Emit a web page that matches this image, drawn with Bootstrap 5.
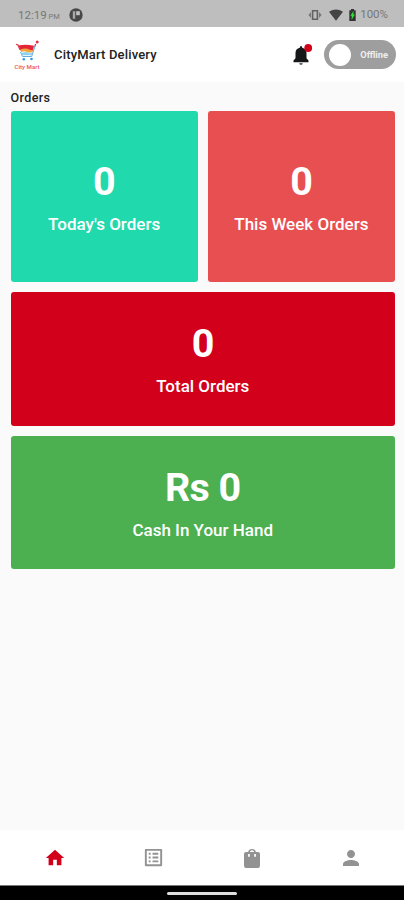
<!DOCTYPE html>
<html lang="en">
<head>
<meta charset="utf-8">
<meta name="viewport" content="width=device-width, initial-scale=1">
<title>CityMart Delivery</title>
<link href="https://cdn.jsdelivr.net/npm/bootstrap@5.3.0/dist/css/bootstrap.min.css" rel="stylesheet">
<style>
body{font-family:Roboto,"Liberation Sans",sans-serif;background:#fafafa;color:#222;height:900px;overflow:hidden}
svg{display:block;flex:none}
.status-bar{height:27px;background:#bebebe;color:#777;font-size:11.5px;padding:2px 16px 0 18px;line-height:25px}
.status-bar .pm{font-size:7.5px}
.time{padding-top:2px}
.app-bar{height:55px;background:#fff;padding:0 8px 0 12px}
.app-title{font-size:13px;font-weight:500;letter-spacing:.17px;margin-left:12px}
.toggle{width:72px;height:29px;background:#9e9e9e;padding:0 8px 0 5px;margin-left:11px;color:#eee;font-size:9.3px;font-weight:700}
.knob{width:22px;height:22px}
.board{padding:7px 9px 0 10.5px}
.heading{font-size:12.5px;font-weight:500;line-height:18px;height:22px;letter-spacing:.4px}
.tiles{gap:10px}
.tile{border-radius:3px;color:#fff;text-align:center}
.tall{height:171px}
.short{height:133.5px}
.teal{background:#20d9ad}.coral{background:#e84f50}.crimson{background:#d3001c}.green{background:#4caf50}
.value{font-size:39.5px;font-weight:700;line-height:46px;letter-spacing:-.6px}
.label{font-size:17px;font-weight:500;line-height:20px;margin-top:9px}
.bottom-nav{height:55px;background:#fff;color:#929292;padding:0 3px 0 6px}
.bottom-nav a{color:inherit}
.bottom-nav .current{color:#d3001c}
.system-bar{height:15px;background:#000;border-top:1px solid #777}
.handle{width:70px;height:3px;background:#ddd}
</style>
<script src="https://cdn.jsdelivr.net/npm/bootstrap@5.3.0/dist/js/bootstrap.bundle.min.js"></script>
</head>
<body class="d-flex flex-column">
<div class="status-bar d-flex align-items-center">
  <span class="time">12:19<span class="pm"> PM</span></span>
  <svg width="14" height="14" viewBox="0 0 14 14" style="margin-left:9px"><circle cx="7" cy="7" r="6.7" fill="#484848"/><path d="M3.8 3.2h2.4v7.6H3.8z" fill="#a8a8a8"/><path d="M7.2 3.2h3.6v4H7.2z" fill="#c4c4c4"/></svg>
  <svg class="ms-auto" width="14" height="12" viewBox="0 0 14 12"><path d="M4.6 1.8h4.8v8.4H4.6z" fill="none" stroke="#626262" stroke-width="1.6"/><path d="M3 3v6L.4 6zM11 3v6l2.600-3z" fill="#777"/></svg>
  <svg width="14" height="12" viewBox="0 0 14 12" style="margin-left:7px"><path d="M0 2.8Q7-1.8 14 2.8L7 11.7z" fill="#444"/></svg>
  <svg width="7" height="12" viewBox="0 0 7 12" style="margin-left:6px"><path d="M2 0h3v1.200h1.700V12H.3V1.200H2z" fill="#333"/><path d="M4.500 2 1.300 6.800h1.400v3.900l3.200-5.200H4.500z" fill="#34dc36"/></svg>
  <span style="margin-left:4px">100%</span>
</div>
<header class="app-bar d-flex align-items-center">
  <svg width="30" height="30" viewBox="0 0 30 30" role="img" aria-label="City Mart">
    <path d="M6.500 5.500q7-1.800 15.500.3l-1 4.700H8.500z" fill="#e32636"/>
    <path d="M8.400 9.500q5-2 9.500.3 2 1 3.500.3l-.8 2.100q-3.500 1-6-.5-3-1-5.500.5z" fill="#f4a23a"/>
    <path d="M9.500 13q5-2 8 .3l3-.4-1 2.400h-9z" fill="#8bd3ef"/>
    <path d="m8.500 12 2 4.500h9.200L23 6" fill="none" stroke="#63afe3"/>
    <path d="M4 4.200 6 5l2 4.800M22.800 6.500l.8-2.500" fill="none" stroke="#dd2e42" stroke-width="1.200"/>
    <circle cx="25.200" cy="2" r="1.500" fill="#e43244"/>
    <circle cx="11.800" cy="19.300" r="1.300" fill="#3698dc"/><circle cx="19.500" cy="19" r="1.300" fill="#3698dc"/>
    <text x="2.500" y="28.500" font-family="Roboto,Liberation Sans,sans-serif" font-size="6" font-weight="500" fill="#ec5361" textLength="25" lengthAdjust="spacingAndGlyphs">City Mart</text>
  </svg>
  <span class="app-title">CityMart Delivery</span>
  <svg class="ms-auto" width="22" height="24" viewBox="0 0 22 24"><path d="M2.500 19.200v-1.600L4.500 15.300V10q0-4.300 4.300-5.300 0-1.700 1.200-1.700t1.200 1.700Q15.500 5.700 15.500 10v5.300l2 2.300v1.600z" fill="#161719"/><path d="M8.200 20.200h3.600q-.4 1.600-1.800 1.600t-1.800-1.600z" fill="#333"/><circle cx="17.200" cy="5" r="3.900" fill="#d3001c"/></svg>
  <div class="toggle rounded-pill d-flex align-items-center justify-content-between"><span class="knob bg-white rounded-circle"></span><span>Offline</span></div>
</header>
<main class="board flex-grow-1">
  <h1 class="heading m-0">Orders</h1>
  <div class="tiles d-flex flex-column">
    <div class="tiles d-flex">
      <section class="tile tall teal w-50 d-flex flex-column justify-content-center"><div class="value">0</div><div class="label">Today's Orders</div></section>
      <section class="tile tall coral w-50 d-flex flex-column justify-content-center"><div class="value">0</div><div class="label">This Week Orders</div></section>
    </div>
    <section class="tile short crimson d-flex flex-column justify-content-center"><div class="value">0</div><div class="label">Total Orders</div></section>
    <section class="tile short green d-flex flex-column justify-content-center"><div class="value">Rs 0</div><div class="label">Cash In Your Hand</div></section>
  </div>
</main>
<nav class="bottom-nav d-flex align-items-center justify-content-between">
  <a href="#" class="current flex-fill d-flex justify-content-center" aria-label="Home"><svg width="22" height="22" viewBox="0 0 24 24" fill="currentColor"><path d="M10 20v-6h4v6h5v-8h3L12 3 2 12h3v8z"/></svg></a>
  <a href="#" class="flex-fill d-flex justify-content-center" aria-label="Orders"><svg width="23" height="23" viewBox="0 0 24 24" fill="currentColor"><path d="M19 5v14H5V5h14m1.100-2H3.900c-.5 0-.9.4-.9.9v16.200c0 .4.4.9.9.9h16.200c.4 0 .9-.5.9-.9V3.900c0-.5-.5-.9-.9-.9zM11 7h6v2h-6V7zm0 4h6v2h-6v-2zm0 4h6v2h-6zM7 7h2v2H7zm0 4h2v2H7zm0 4h2v2H7z"/></svg></a>
  <a href="#" class="flex-fill d-flex justify-content-center" aria-label="Bag"><svg width="22" height="24" viewBox="0 0 22 24" fill="currentColor"><path fill-rule="evenodd" d="M17 6h-2.100a4 4 0 0 0-7.800 0H5Q3 6 3 8v11.500Q3 22 5 22h12q2 0 2-2.500V8q0-2-2-2zM8.800 6a2.300 2.300 0 0 1 4.400 0zM7.100 8h1.700v2.600q-.9.900-1.700 0zM13.200 8h1.700v2.600q-.8.900-1.700 0z"/></svg></a>
  <a href="#" class="flex-fill d-flex justify-content-center" aria-label="Profile"><svg width="24" height="24" viewBox="0 0 24 24" fill="currentColor"><path d="M12 12c2.210 0 4-1.790 4-4s-1.790-4-4-4-4 1.790-4 4 1.790 4 4 4zm0 2c-2.670 0-8 1.340-8 4v2h16v-2c0-2.660-5.330-4-8-4z"/></svg></a>
</nav>
<div class="system-bar d-flex align-items-center justify-content-center"><span class="handle rounded-pill"></span></div>
</body>
</html>
